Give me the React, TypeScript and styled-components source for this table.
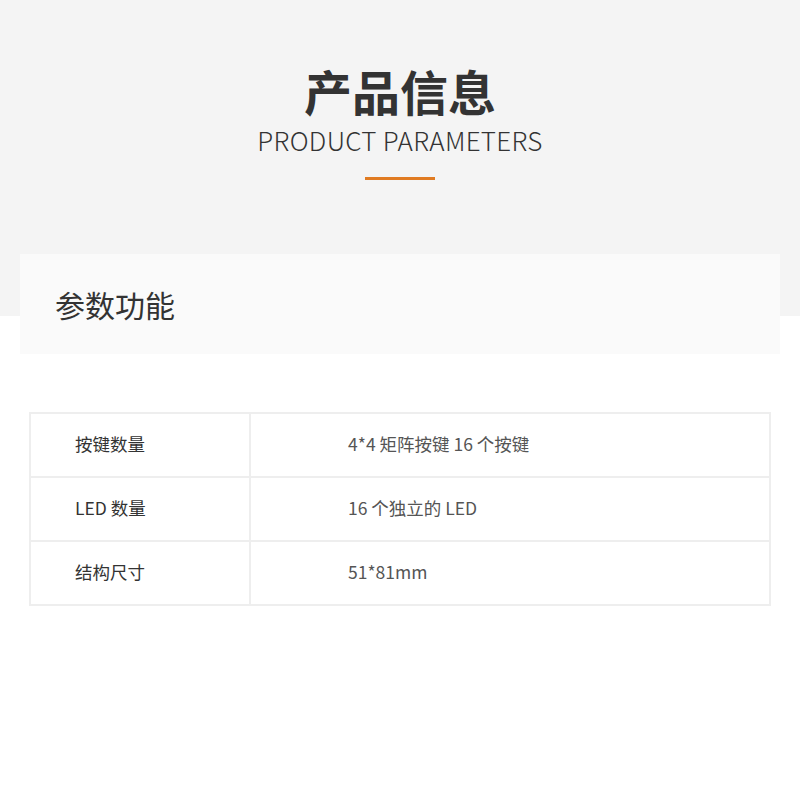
import React, { FC } from "react";
import styled, { createGlobalStyle } from "styled-components";

const GlobalStyle = createGlobalStyle`
  body {
    margin: 0;
    background: #fff;
    font-family: "Noto Sans CJK SC", "Noto Sans", sans-serif;
    color: #333;
  }
`;

const Page = styled.div`
  width: 800px;
  min-height: 800px;
  background: #fff;
`;

const Banner = styled.header`
  height: 316px;
  background: #f4f4f4;
  display: flex;
  flex-direction: column;
  align-items: center;
  padding-top: 58px;
  box-sizing: border-box;
`;

const Title = styled.h1`
  margin: 0;
  font-size: 48px;
  line-height: 64px;
  font-weight: 700;
  color: #333;
`;

const Subtitle = styled.div`
  font-size: 26px;
  line-height: 36px;
  font-weight: 300;
  color: #333;
  letter-spacing: 0.3px;
`;

const Accent = styled.div`
  width: 70px;
  height: 3px;
  background: #e07b22;
  margin-top: 19px;
`;

const SectionCard = styled.div`
  margin: -62px 20px 0;
  height: 100px;
  background: #fafafa;
  display: flex;
  align-items: center;
  padding-left: 35px;
  box-sizing: border-box;
  position: relative;
`;

const SectionTitle = styled.h2`
  margin: 0;
  font-size: 30px;
  font-weight: 400;
  color: #333;
`;

const Table = styled.table`
  margin: 58px 29px 0;
  width: 742px;
  border-collapse: collapse;
  border: 2px solid #eeeeee;
`;

const Cell = styled.td<{ $value?: boolean }>`
  height: 58px;
  border: 2px solid #eeeeee;
  padding: 0 0 4px ${(p) => (p.$value ? "97px" : "44px")};
  width: ${(p) => (p.$value ? "auto" : "174px")};
  font-size: 17.5px;
  color: ${(p) => (p.$value ? "#555" : "#333")};
  font-weight: 400;
  vertical-align: middle;
`;

const rows = [
  { label: "按键数量", value: "4*4 矩阵按键 16 个按键" },
  { label: "LED 数量", value: "16 个独立的 LED" },
  { label: "结构尺寸", value: "51*81mm" },
];

const App: FC = () => {
  return (
    <Page>
      <GlobalStyle />
      <Banner>
        <Title>产品信息</Title>
        <Subtitle>PRODUCT PARAMETERS</Subtitle>
        <Accent />
      </Banner>
      <SectionCard>
        <SectionTitle>参数功能</SectionTitle>
      </SectionCard>
      <Table>
        <tbody>
          {rows.map((r) => (
            <tr key={r.label}>
              <Cell>{r.label}</Cell>
              <Cell $value>{r.value}</Cell>
            </tr>
          ))}
        </tbody>
      </Table>
    </Page>
  );
};

export default App;
